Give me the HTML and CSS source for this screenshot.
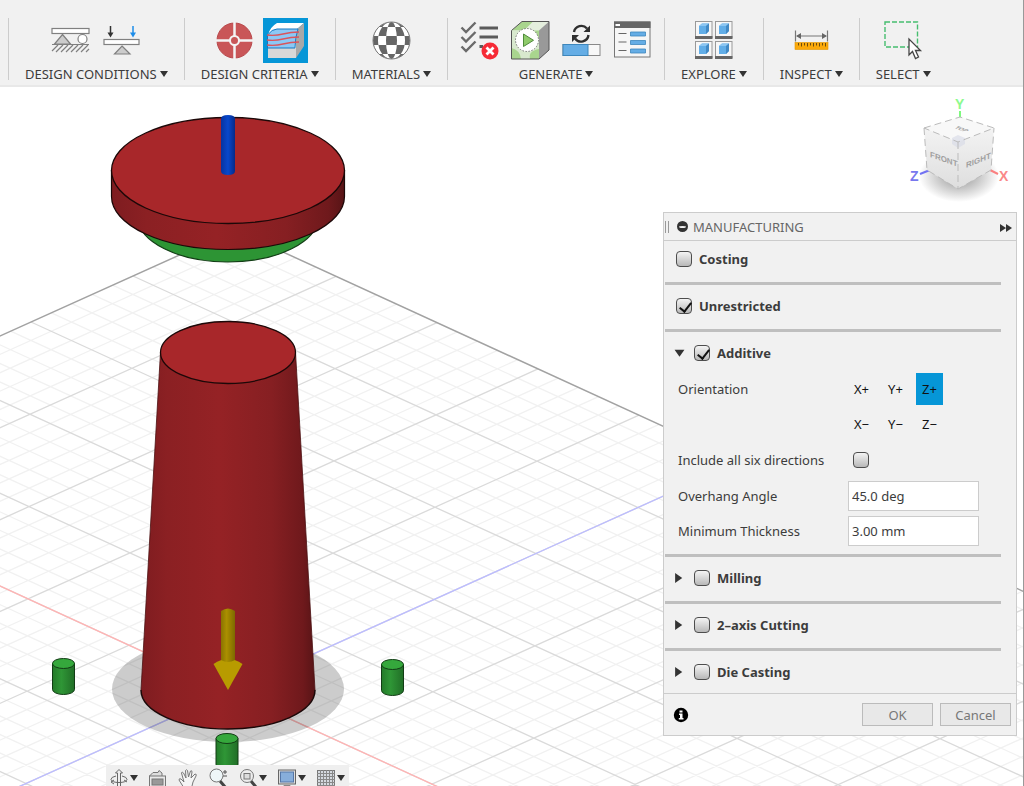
FILE: index.html
```html
<!DOCTYPE html>
<html lang="en">
<head>
    <meta charset="UTF-8">
    <title>Generative Design</title>
    <link rel="stylesheet" href="styles.css">
</head>
<body>
<div class="toolbar">
    <div class="group">
        <div class="tools">
            <button class="tool" aria-label="Structural constraints">
                <svg viewBox="0 0 45 45" fill="none" stroke="#808080" stroke-width="1.2">
                    <rect x="4" y="10.5" width="37" height="5" fill="#fff"/>
                    <path d="M14.500 16.500L22.500 26H6.500Z" fill="#ccc"/>
                    <circle cx="34.500" cy="21" r="4.500" fill="#fff"/>
                    <path d="M4 26.500H41"/>
                    <path d="M4 33l6-6M8 34l7-7M13 34l7-7M18 34l7-7M23 34l7-7M28 34l7-7M33 34l7-7M38 34l3-3"/>
                </svg>
            </button>
            <button class="tool" aria-label="Structural loads">
                <svg viewBox="0 0 45 45" fill="none" stroke="#808080" stroke-width="1.2">
                    <rect x="5" y="21.500" width="35" height="5" fill="#fff"/>
                    <path d="M23 28L31 36H15.500Z" fill="#ccc"/>
                    <path d="M11.500 8V15" stroke="#333" stroke-width="1.500"/>
                    <path d="M8.500 14.500H14.500L11.500 19.500Z" fill="#333" stroke="none"/>
                    <path d="M34 8V15" stroke="#1d8ce8" stroke-width="1.500"/>
                    <path d="M31 14.500H37L34 19.500Z" fill="#1d8ce8" stroke="none"/>
                </svg>
            </button>
        </div>
        <button class="menu">DESIGN CONDITIONS<i class="caret"></i></button>
    </div>
    <div class="group">
        <div class="tools">
            <button class="tool" aria-label="Objectives">
                <svg viewBox="0 0 45 45">
                    <circle cx="22.500" cy="22.500" r="17.500" fill="#c95658" stroke="#b8484b" stroke-width="1"/>
                    <path d="M22.500 4V41M4 22.500H41" stroke="#f4f4f4" stroke-width="2.500"/>
                    <circle cx="22.500" cy="22.500" r="4.500" fill="#c95658" stroke="#f4f4f4" stroke-width="2"/>
                </svg>
            </button>
            <button class="tool active" aria-label="Manufacturing">
                <svg viewBox="0 0 45 45">
                    <path d="M5 17Q7 9 14 5H41L33 12V40H5Z" fill="#fff"/>
                    <path d="M33 12L41 5V28L33 40Z" fill="#a8a8a8"/>
                    <path d="M5 30H33V40H5Z" fill="#d8d8d8"/>
                    <path d="M4.500 17Q9 11 14 11H35Q32 20 32 30H4.500Z" fill="#8cc8f5" stroke="#1579c2"/>
                    <path d="M4 17Q12 18 20 16T36 14M4 22Q12 23 20 21T36 19M4 27Q12 28 20 26T36 24" fill="none" stroke="#d9555c" stroke-width="1.400"/>
                </svg>
            </button>
        </div>
        <button class="menu">DESIGN CRITERIA<i class="caret"></i></button>
    </div>
    <div class="group">
        <div class="tools">
            <button class="tool" aria-label="Study materials">
                <svg viewBox="0 0 45 45">
                    <clipPath id="ball"><circle cx="22.500" cy="22.500" r="18.500"/></clipPath>
                    <circle cx="22.500" cy="22.500" r="18.500" fill="#fff"/>
                    <path clip-path="url(#ball)" fill="#666" fill-rule="evenodd" d="M4 22.500a18.500 18.500 0 0 1 37 0a18.500 18.500 0 0 1-37 0M9 22.500a13.500 18.500 0 0 1 27 0a13.500 18.500 0 0 1-27 0M17 22.500a5.500 18.500 0 0 1 11 0a5.500 18.500 0 0 1-11 0M0 18H45V27H0ZM0 9H45V36H0Z"/>
                    <circle cx="22.500" cy="22.500" r="18.500" fill="none" stroke="#777"/>
                </svg>
            </button>
        </div>
        <button class="menu">MATERIALS<i class="caret"></i></button>
    </div>
    <div class="group">
        <div class="tools">
            <button class="tool" aria-label="Pre-check">
                <svg viewBox="0 0 45 45" fill="none">
                    <path d="M4.500 9.500L9 14L18.500 4.500M4.500 19L9 23.500L18.500 14M4.500 28.500L9 33L18.500 23.500" stroke="#6a6a6a" stroke-width="2.400"/>
                    <path d="M22.500 10H41M22.500 19H41M22.500 28.500H26" stroke="#5a5a5a" stroke-width="3"/>
                    <circle cx="33" cy="33" r="8.500" fill="#f62b36"/>
                    <path d="M29.500 29.500L36.500 36.500M36.500 29.500L29.500 36.500" stroke="#fff" stroke-width="2.800"/>
                </svg>
            </button>
            <button class="tool" aria-label="Previewer">
                <svg viewBox="0 0 45 45">
                    <path d="M3.500 12.500L14 3.500H41L31 12.500Z" fill="#e4eedd"/>
                    <path d="M14 3.500H25L16 12.500H4Z" fill="#a9d58e"/>
                    <path d="M31 12.500L41 3.500V32L31 41Z" fill="#999"/>
                    <path d="M3.500 12.500H31V41H3.500Z" fill="#d8e9ce"/>
                    <path d="M3.500 30Q12 32 13 41H3.500ZM22 41Q20 33 31 31V41ZM24 12.500H31V20Q26 18 24 12.500Z" fill="#a9d58e"/>
                    <path d="M3.500 12.500L14 3.500H41V32L31 41H3.500Z" fill="none" stroke="#555"/>
                    <circle cx="19" cy="22" r="11.500" fill="#fff" stroke="#777" stroke-dasharray="1.500 1.500"/>
                    <path d="M15.500 16L25.500 22.300L15.500 28.500Z" fill="#8fcb6b" stroke="#4f8a3b"/>
                </svg>
            </button>
            <button class="tool" aria-label="Generate">
                <svg viewBox="0 0 45 45">
                    <rect x="4" y="26.500" width="37" height="11" fill="#f7f7f7" stroke="#888"/>
                    <rect x="4" y="26.500" width="25" height="11" fill="#65ade5" stroke="#3d87bd"/>
                    <path d="M15 14A7.500 7.500 0 0 1 28 10.500M29.500 17A7.500 7.500 0 0 1 16 20.500" fill="none" stroke="#2e2e2e" stroke-width="2.400"/>
                    <path d="M31 7.500V14H24.500ZM13 24V17H20Z" fill="#2e2e2e"/>
                </svg>
            </button>
            <button class="tool" aria-label="Job status">
                <svg viewBox="0 0 45 45">
                    <rect x="4.500" y="4" width="35.500" height="35" fill="#f6f6f6" stroke="#777"/>
                    <path d="M4 3.500H40.500V10H4Z" fill="#666"/>
                    <path d="M5.500 6H10V8H5.500Z" fill="#fff"/>
                    <path d="M8.500 15.500H16.500M8.500 24H16.500M8.500 32.500H16.500" stroke="#666" stroke-width="1.200"/>
                    <path d="M20.500 14H35.500V18H20.500ZM20.500 22.500H35.500V26.500H20.500ZM20.500 31H35.500V35H20.500Z" fill="#65ade5" stroke="#3d87bd" stroke-width=".8"/>
                </svg>
            </button>
        </div>
        <button class="menu">GENERATE<i class="caret"></i></button>
    </div>
    <div class="group">
        <div class="tools">
            <button class="tool" aria-label="Explore outcomes">
                <svg viewBox="0 0 45 45">
                    <defs>
                        <g id="thumb">
                            <rect x=".5" y=".5" width="16.500" height="16" fill="#f7f7f7" stroke="#999"/>
                            <path d="M0 15H17.500V18H0Z" fill="#666"/>
                            <path d="M4 5L7 2.500H14V10L11 13H4Z" fill="#62aee8"/>
                            <path d="M4 5L7 2.500H14L11 5Z" fill="#8cc6f2"/>
                            <path d="M11 5L14 2.500V10L11 13Z" fill="#4189c4"/>
                        </g>
                    </defs>
                    <use href="#thumb" x="4" y="3"/>
                    <use href="#thumb" x="24" y="3"/>
                    <use href="#thumb" x="4" y="23"/>
                    <use href="#thumb" x="24" y="23"/>
                </svg>
            </button>
        </div>
        <button class="menu">EXPLORE<i class="caret"></i></button>
    </div>
    <div class="group">
        <div class="tools">
            <button class="tool" aria-label="Measure">
                <svg viewBox="0 0 45 45">
                    <path d="M6.500 12.500V23.500M38.500 12.500V23.500M8 18H37" stroke="#777" stroke-width="1.200"/>
                    <path d="M7 18L12 15V21ZM38 18L33 15V21Z" fill="#666"/>
                    <rect x="6" y="24.500" width="33" height="7" fill="#fba90a" stroke="#e29400" stroke-width=".6"/>
                    <path d="M9.500 25V27.500M12.500 25V28.500M15.500 25V27.500M18.500 25V28.500M21.500 25V27.500M24.500 25V28.500M27.500 25V27.500M30.500 25V28.500M33.500 25V27.500M36.500 25V28.500" stroke="#6b4c10"/>
                </svg>
            </button>
        </div>
        <button class="menu">INSPECT<i class="caret"></i></button>
    </div>
    <div class="group">
        <div class="tools">
            <button class="tool" aria-label="Select">
                <svg viewBox="0 0 45 45">
                    <rect x="4" y="4" width="32.500" height="25" fill="none" stroke="#46bd6f" stroke-width="1.400" stroke-dasharray="5 2"/>
                    <path d="M28 21V37L31.500 33.500L34.500 40.500L37.500 39L34.500 32.500H39.500Z" fill="#fff" stroke="#444" stroke-width="1.300"/>
                </svg>
            </button>
        </div>
        <button class="menu">SELECT<i class="caret"></i></button>
    </div>
</div>

<div class="viewport">
    <svg class="scene">
        <defs>
            <linearGradient id="red">
                <stop offset="0" stop-color="#7e1c20"/>
                <stop offset=".15" stop-color="#8b2023"/>
                <stop offset=".45" stop-color="#952225"/>
                <stop offset=".75" stop-color="#861f22"/>
                <stop offset=".93" stop-color="#6f191c"/>
                <stop offset="1" stop-color="#571416"/>
            </linearGradient>
            <linearGradient id="green">
                <stop offset="0" stop-color="#237a29"/>
                <stop offset=".4" stop-color="#2f9636"/>
                <stop offset="1" stop-color="#216e27"/>
            </linearGradient>
            <linearGradient id="blue">
                <stop offset="0" stop-color="#0733a0"/>
                <stop offset=".5" stop-color="#0848cc"/>
                <stop offset="1" stop-color="#052a88"/>
            </linearGradient>
            <linearGradient id="gold">
                <stop offset="0" stop-color="#8a7300"/>
                <stop offset=".4" stop-color="#ab8f00"/>
                <stop offset="1" stop-color="#7d6900"/>
            </linearGradient>
            <g id="peg" stroke="#123d15">
                <path d="M0 5V31A11 5 0 0 0 22 31V5Z" fill="url(#green)"/>
                <ellipse cx="11" cy="5" rx="11" ry="5" fill="#35a83c"/>
            </g>
        </defs>
        <g transform="translate(0 -87)">
            <!-- ground grid, 10 x 10 cells, lines added by the script -->
            <g id="grid" transform="matrix(20.2 9.26 -20.4 9.2 235 230)" fill="none">
                <path id="minor" class="minor"/>
                <path id="major" class="major"/>
                <rect class="edge" width="50" height="50"/>
                <path class="axis-x" d="M0 25H50"/>
                <path class="axis-z" d="M25 0V50"/>
            </g>
            <ellipse cx="228" cy="689" rx="116" ry="53" fill="#000" fill-opacity=".2"/>
            <!-- body -->
            <path d="M160.500 352L141 690A87 39 0 0 0 315 690L295.500 352Z" fill="url(#red)"/>
            <path d="M141 690A87 39 0 0 0 315 690" fill="none" stroke="#1c0808" stroke-width="1.500"/>
            <path d="M160.500 352L141 690M295.500 352L315 690" stroke="#4a1012" stroke-width=".8"/>
            <ellipse cx="228" cy="352.500" rx="67.500" ry="31" fill="#a8272a" stroke="#1c0808" stroke-width="1.300"/>
            <!-- load arrow -->
            <path d="M221 611Q228 606 235 611V662H221Z" fill="url(#gold)"/>
            <path d="M213.500 664Q228 654 242.500 664L228 690Z" fill="#b89b00"/>
            <path d="M221 650H235V660Q228 664 221 660Z" fill="url(#gold)"/>
            <!-- lid -->
            <path d="M138 217A90 45 0 0 0 318 217Z" fill="#2d9434" stroke="#123d15" stroke-width="1.200"/>
            <path d="M111.500 170.500V196.500A116.500 53 0 0 0 344.500 196.500V170.500Z" fill="url(#red)" stroke="#1c0808" stroke-width="1.200"/>
            <ellipse cx="228" cy="170.500" rx="116.500" ry="53" fill="#a8272a" stroke="#1c0808" stroke-width="1.300"/>
            <path d="M221 119Q221 115 228 115T235 119V171Q235 175 228 175T221 171Z" fill="url(#blue)"/>
            <!-- pegs -->
            <use href="#peg" x="52.500" y="658.500"/>
            <use href="#peg" x="381.500" y="659.500"/>
            <use href="#peg" x="216" y="733.500"/>
        </g>
    </svg>

    <svg class="cube" viewBox="0 0 120 120">
        <defs>
            <radialGradient id="shade">
                <stop offset="0" stop-color="#777" stop-opacity=".8"/>
                <stop offset="1" stop-color="#777" stop-opacity="0"/>
            </radialGradient>
            <linearGradient id="front" x2="0" y2="1">
                <stop offset="0" stop-color="#f3f3f3"/>
                <stop offset="1" stop-color="#dedede"/>
            </linearGradient>
        </defs>
        <ellipse cx="59" cy="86" rx="40" ry="26" fill="url(#shade)"/>
        <path d="M60 21V30" stroke="#7dfa7d" stroke-width="2"/>
        <path d="M20 84L30 80" stroke="#7272f2" stroke-width="2"/>
        <path d="M90 80L98 84" stroke="#fa8080" stroke-width="2"/>
        <path d="M24 38L60 27L94 38L58 52Z" fill="#f8f8f8"/>
        <path d="M24 38L58 52V99L27 80Z" fill="url(#front)"/>
        <path d="M94 38L58 52V99L91 80Z" fill="url(#front)"/>
        <path d="M52 48L58 45L65 48V54L58 58L52 54Z" fill="#d5d9e6" fill-opacity=".6"/>
        <path d="M24 38L60 27L94 38L58 52ZM24 38L27 80L58 99L91 80L94 38M58 52V99" fill="none" stroke="#bbb" stroke-dasharray="7 4"/>
        <text class="face" transform="matrix(1 .35 0 1 30 67)">FRONT</text>
        <text class="face" transform="matrix(1 -.4 0 1 66 78)">RIGHT</text>
        <text class="face top" transform="matrix(.8 .3 -.8 .4 54 38)">TOP</text>
        <text class="axis" x="55" y="19" fill="#8dfa8d">Y</text>
        <text class="axis" x="10" y="91" fill="#7878ee">Z</text>
        <text class="axis" x="99" y="91" fill="#fa8888">X</text>
    </svg>

    <form class="panel" onsubmit="return false">
        <div class="panel-head">
            <span class="grip"></span>
            <button type="button" class="collapse" aria-label="Collapse"></button>
            <span class="panel-title">MANUFACTURING</span>
            <button type="button" class="dock" aria-label="Dock">
                <svg width="12" height="8" viewBox="0 0 12 8"><path d="M0 0L6 4L0 8ZM6 0L12 4L6 8Z" fill="#333"/></svg>
            </button>
        </div>
        <div class="panel-body">
            <div class="section">
                <label class="heading"><input type="checkbox">Costing</label>
            </div>
            <div class="section">
                <label class="heading"><input type="checkbox" checked>Unrestricted</label>
            </div>
            <div class="section additive">
                <div class="fold">
                    <button type="button" class="arrow open" aria-label="Fold Additive"></button>
                    <label class="heading"><input type="checkbox" checked>Additive</label>
                </div>
                <div class="fields">
                    <span>Orientation</span>
                    <div class="dirs">
                        <button type="button">X+</button>
                        <button type="button">Y+</button>
                        <button type="button" class="on">Z+</button>
                    </div>
                    <span></span>
                    <div class="dirs">
                        <button type="button">X−</button>
                        <button type="button">Y−</button>
                        <button type="button">Z−</button>
                    </div>
                    <label for="six">Include all six directions</label>
                    <input id="six" class="six" type="checkbox">
                    <label for="angle">Overhang Angle</label>
                    <input id="angle" class="value" type="text" value="45.0 deg">
                    <label for="thickness">Minimum Thickness</label>
                    <input id="thickness" class="value" type="text" value="3.00 mm">
                </div>
            </div>
            <div class="section fold">
                <button type="button" class="arrow" aria-label="Unfold Milling"></button>
                <label class="heading"><input type="checkbox">Milling</label>
            </div>
            <div class="section fold">
                <button type="button" class="arrow" aria-label="Unfold 2-axis Cutting"></button>
                <label class="heading"><input type="checkbox">2–axis Cutting</label>
            </div>
            <div class="section fold">
                <button type="button" class="arrow" aria-label="Unfold Die Casting"></button>
                <label class="heading"><input type="checkbox">Die Casting</label>
            </div>
        </div>
        <div class="panel-foot">
            <button type="button" class="info" aria-label="Information">
                <svg width="16" height="16" viewBox="0 0 16 16"><circle cx="8" cy="8" r="7.200"/><path d="M6.500 3.500H9.500V5.500H6.500ZM6 6.500H9.500V11H10.500V12.500H5.800V11H7V8H6Z" fill="#fff"/></svg>
            </button>
            <button type="button" class="btn">OK</button>
            <button type="button" class="btn">Cancel</button>
        </div>
    </form>

    <div class="navbar">
        <button class="nav" aria-label="Orbit">
            <svg viewBox="0 0 20 20" fill="none" stroke="#666">
                <path d="M8.500 18V5H6.500L10 1.500L13.500 5H11.500V18" fill="#eee"/>
                <path d="M7 8Q2 9 2 11.500Q3 14.500 10 14.500T18 11.500Q18 9 13 8"/>
                <path d="M5 12L2 14L5 16M15 12L18 14"/>
            </svg>
            <i class="caret"></i>
        </button>
        <button class="nav" aria-label="Look at">
            <svg viewBox="0 0 20 20" stroke="#777">
                <path d="M1.500 8L5 4.500H10L11 2.500L14 5H14V8" fill="#ddd"/>
                <rect x="1.500" y="8" width="16" height="12" fill="#e8e8e8"/>
                <rect x="4" y="11" width="11" height="6" fill="#999"/>
            </svg>
        </button>
        <button class="nav" aria-label="Pan">
            <svg viewBox="0 0 20 20" fill="#f5f5f5" stroke="#777">
                <path d="M6 20L1 12Q1 10 3 11L6 14L3.500 5Q4 3 5.500 5L8 10L7.500 2.500Q8.500 1 9.500 2.500L10.500 9L12.500 3Q14 2 14 4L13 10L17 6Q19 6 18 8L15 14L13.500 20Z"/>
            </svg>
        </button>
        <button class="nav" aria-label="Zoom">
            <svg viewBox="0 0 20 20">
                <path d="M12 13L18 20" stroke="#444" stroke-width="3"/>
                <circle cx="8.500" cy="7.500" r="6.500" fill="#eef6f8" stroke="#777"/>
                <path d="M15 4H19M17 2V6M15 8H19" stroke="#555"/>
            </svg>
        </button>
        <button class="nav" aria-label="Fit">
            <svg viewBox="0 0 20 20">
                <path d="M13 13L18 19" stroke="#444" stroke-width="3"/>
                <circle cx="9" cy="8" r="6.500" fill="#eee" stroke="#777"/>
                <rect x="6" y="5.500" width="6" height="5.500" fill="#ddd" stroke="#777"/>
            </svg>
            <i class="caret"></i>
        </button>
        <button class="nav" aria-label="Display settings">
            <svg viewBox="0 0 20 20">
                <rect x="1.500" y="2" width="17" height="14" fill="#ddd" stroke="#666"/>
                <rect x="3.500" y="4" width="13" height="10" fill="#87aedb" stroke="#5577a8"/>
                <path d="M7 17H13L15 20H5Z" fill="#888"/>
            </svg>
            <i class="caret"></i>
        </button>
        <button class="nav" aria-label="Grid and snaps">
            <svg viewBox="0 0 20 20">
                <rect x="1.500" y="2.500" width="17" height="17" fill="#d5d9df" stroke="#777"/>
                <path d="M4.500 2V20M7.500 2V20M10.500 2V20M13.500 2V20M16.500 2V20M1 5.500H19M1 8.500H19M1 11.500H19M1 14.500H19M1 17.500H19" stroke="#888"/>
            </svg>
            <i class="caret"></i>
        </button>
    </div>
</div>

<script>
    // every fifth line is a major one
    let minor = ""
    let major = ""
    for (let i = 1; i < 50; i++) {
        let line = "M" + i + " 0V50M0 " + i + "H50"
        if (i % 5 === 0) {
            major += line
        } else {
            minor += line
        }
    }
    document.querySelector("#minor").setAttribute("d", minor)
    document.querySelector("#major").setAttribute("d", major)
</script>
</body>
</html>
```
FILE: styles.css
```css
* {
    box-sizing: border-box;
}

body {
    display: flex;
    flex-direction: column;
    height: 100vh;
    margin: 0;
    border-right: 1px solid #999;
    overflow: hidden;
    background-color: #fff;
    font-family: "Noto Sans", "Open Sans", sans-serif;
    font-size: 13px;
    color: #3c3c3c;
}

button {
    padding: 0;
    border: 0;
    background: none;
    font: inherit;
    color: inherit;
}

.caret {
    display: inline-block;
    border: 4px solid transparent;
    border-top: 6px solid #333;
    border-bottom: 0;
}

/* toolbar */
.toolbar {
    display: flex;
    height: 87px;
    padding: 18px 8px 5px;
    border-bottom: 2px solid #e8e8e8;
    background-color: #f1f1f1;
}

.group {
    display: flex;
    flex-direction: column;
    align-items: center;
    padding: 0 9px;
    border-left: 1px solid #ccc;
}

.tools {
    display: flex;
    gap: 6px;
}

.tool {
    width: 45px;
    height: 45px;
}

.tool svg {
    display: block;
}

.active {
    background-color: #0696d7;
}

.menu {
    display: flex;
    align-items: center;
    gap: 3px;
    padding: 0 7px;
    line-height: 22px;
    white-space: nowrap;
}

/* canvas */
.viewport {
    position: relative;
    flex: 1;
    overflow: hidden;
}

.scene {
    position: absolute;
    width: 100%;
    height: 100%;
}

#grid path,
#grid rect {
    vector-effect: non-scaling-stroke;
}

.minor {
    stroke: #f1f1f1;
    stroke-width: 1.3;
}

.major {
    stroke: #dadada;
    stroke-width: 1.3;
}

.edge {
    stroke: #a2a2a2;
    stroke-width: 1.5;
}

.axis-x {
    stroke: #ffb3b3;
    stroke-width: 1.3;
}

.axis-z {
    stroke: #bcbcff;
    stroke-width: 1.3;
}

.cube {
    position: absolute;
    top: 3px;
    right: 3px;
    width: 120px;
    height: 120px;
}

.face {
    font-family: "Liberation Sans", sans-serif;
    font-size: 8px;
    font-weight: bold;
    fill: #a0a0a0;
}

.top {
    font-size: 7px;
}

.axis {
    font-family: "Liberation Sans", sans-serif;
    font-size: 14px;
    font-weight: bold;
}

/* manufacturing panel */
.panel {
    position: absolute;
    top: 125px;
    right: 6px;
    width: 354px;
    border: 1px solid #ccc;
    background-color: #f1f1f1;
}

.panel-head {
    display: flex;
    align-items: center;
    height: 28px;
    padding: 0 4px 0 1px;
    border-bottom: 1px solid #ccc;
}

.grip {
    width: 4px;
    height: 12px;
    border: 1px solid #999;
    border-top: 0;
    border-bottom: 0;
}

.collapse {
    width: 11px;
    height: 11px;
    margin: 0 5px 0 8px;
    border: 4px solid #333;
    border-width: 5px 2px 4px;
    border-radius: 50%;
    background-color: #f1f1f1;
}

.panel-title {
    flex: 1;
    color: #666;
}

.panel-body {
    padding: 0 15px 0 1px;
}

.section {
    padding: 13px 0 15px;
    border-bottom: 3px solid #bfbfbf;
    line-height: 16px;
}

.section:first-child {
    padding-top: 10px;
}

.section:last-child {
    padding-bottom: 13px;
    border-bottom: 0;
}

.heading {
    display: flex;
    gap: 7px;
    padding-left: 11px;
    font-weight: bold;
}

.fold {
    display: flex;
    align-items: center;
}

.fold .heading {
    padding-left: 9px;
}

.arrow {
    width: 11px;
    height: 11px;
    margin-left: 9px;
    background-color: #333;
    clip-path: polygon(10% 5%, 75% 50%, 10% 95%);
}

.open {
    clip-path: polygon(5% 20%, 95% 20%, 50% 85%);
}

input[type=checkbox] {
    appearance: none;
    width: 16px;
    height: 16px;
    margin: 0;
    border: 1px solid #4d4d4d;
    border-radius: 4px;
    background: linear-gradient(#f4f4f4, #b8b8b8);
}

input[type=checkbox]:checked::after {
    content: "";
    display: block;
    width: 5px;
    height: 10px;
    margin: 1px 0 0 5px;
    border: solid #111;
    border-width: 0 2px 2px 0;
    transform: rotate(38deg);
}

.additive {
    padding-bottom: 4px;
}

.fields {
    display: grid;
    grid-template-columns: 170px 1fr;
    grid-auto-rows: 1fr;
    align-items: center;
    height: 178px;
    margin-top: 10px;
    margin-bottom: 1px;
    padding-left: 13px;
}

.dirs {
    display: flex;
    gap: 7px;
}

.dirs button {
    width: 27px;
    height: 32px;
    color: #111;
}

.dirs .on {
    background-color: #0696d7;
}

.fields .six {
    margin-left: 5px;
}

.value {
    width: 131px;
    height: 30px;
    padding: 0 3px;
    border: 1px solid #ccc;
    background-color: #fff;
    font: inherit;
    color: inherit;
}

.panel-foot {
    display: flex;
    align-items: center;
    gap: 7px;
    height: 42px;
    padding: 0 5px 0 9px;
    border-top: 1px solid #ccc;
}

.info {
    display: flex;
    margin-right: auto;
}

.btn {
    width: 71px;
    height: 23px;
    border: 1px solid #bbb;
    background-color: #e8e8e8;
    color: #777;
}

/* navigation bar, cut off by the window */
.navbar {
    position: absolute;
    left: 106px;
    bottom: 0;
    display: flex;
    gap: 10px;
    height: 21px;
    padding: 3px 4px 0 3px;
    overflow: hidden;
    background-color: #efefef;
}

.nav {
    display: flex;
    align-items: center;
    gap: 1px;
    height: 20px;
}

.nav svg {
    width: 20px;
    height: 20px;
}
```
